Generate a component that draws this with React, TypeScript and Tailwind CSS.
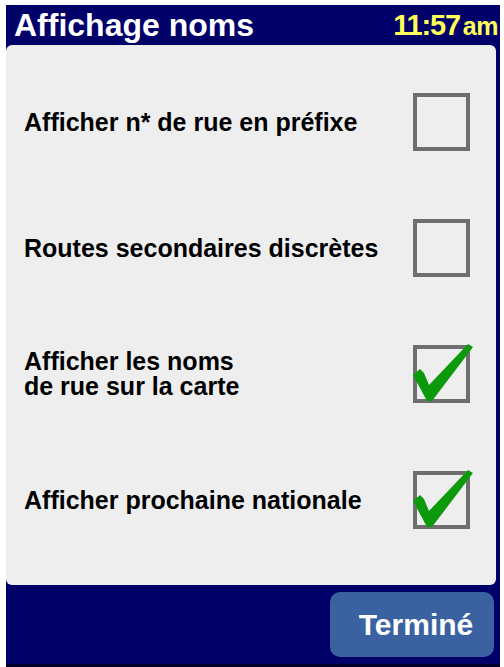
const options = [
  { label: ["Afficher n* de rue en préfixe"], checked: false },
  { label: ["Routes secondaires discrètes"], checked: false },
  { label: ["Afficher les noms", "de rue sur la carte"], checked: true },
  { label: ["Afficher prochaine nationale"], checked: true },
];

function CheckBox({ checked }: { checked: boolean }) {
  return (
    <div className="relative w-[57px] h-[58px] border-[4px] border-[#6e6e6e] shrink-0">
      {checked && (
        <svg
          className="absolute -left-[7px] -top-[8px] w-[64px] h-[62px]"
          viewBox="0 0 64 62"
        >
          <path
            d="M3 34 L10 28 L14 32 L19 44 L58 3 L63 6 L22 60 L17 60 Z"
            fill="#0c9a0c"
          />
        </svg>
      )}
    </div>
  );
}

export default function App() {
  return (
    <div
      className="w-[504px] h-[667px] bg-white pt-[5px] pl-[6px] pr-[4px]"
      style={{ fontFamily: '"Liberation Sans", Arial, sans-serif' }}
    >
      <div className="h-full bg-[#000068] flex flex-col border-b-[3px] border-[#00002a]">
        {/* Title bar */}
        <div className="h-[40px] flex items-center justify-between pl-[8px] pr-[2px]">
          <span className="text-[32px] font-bold text-white leading-none">Affichage noms</span>
          <span className="flex items-baseline gap-[3px] text-[#ffff5a] font-bold leading-none">
            <span className="text-[29px] tracking-[-1.2px]">11:57</span>
            <span className="text-[25px] tracking-[-0.5px]">am</span>
          </span>
        </div>

        {/* Options panel */}
        <div className="h-[540px] w-[490px] bg-[#eeeeee] rounded-[6px] pt-[14px] flex flex-col">
          {options.map((opt, i) => (
            <div key={i} className="h-[126px] flex items-center justify-between pl-[18px] pr-[26px]">
              <div className="text-[25px] font-bold text-black leading-[25px]">
                {opt.label.map((line) => (
                  <div key={line}>{line}</div>
                ))}
              </div>
              <CheckBox checked={opt.checked} />
            </div>
          ))}
        </div>

        {/* Footer */}
        <div className="flex justify-end pt-[7px] pr-[6px]">
          <button className="w-[164px] h-[65px] rounded-[10px] bg-[#3a62a0] text-white text-[30px] font-bold flex items-center justify-center pl-[8px]">
            Terminé
          </button>
        </div>
      </div>
    </div>
  );
}
